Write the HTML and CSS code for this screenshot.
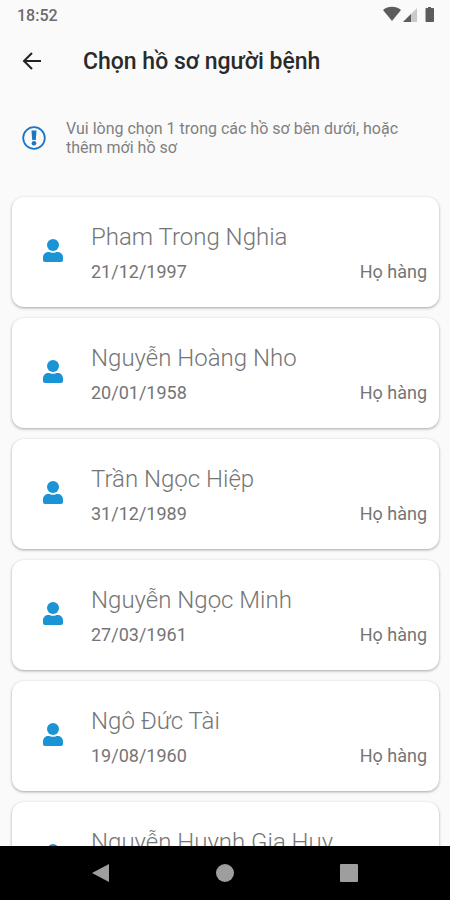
FILE: index.html
```html
<!DOCTYPE html>
<html lang="vi">
<head>
    <meta charset="UTF-8">
    <meta name="viewport" content="width=device-width, initial-scale=1.0">
    <title>Chọn hồ sơ người bệnh</title>
    <link rel="stylesheet" href="styles.css">
</head>
<body>
<svg class="sprite" aria-hidden="true">
    <symbol id="user" viewBox="0 0 20 24">
        <circle cx="10" cy="6" r="6"/>
        <path d="M0 21v-2.500C0 15 2.500 13 5.500 13c1.500 0 2.500.8 4.500.8s3-.8 4.500-.8c3 0 5.500 2 5.500 5.500V21c0 1.300-.8 2-2 2H2c-1.200 0-2-.7-2-2z"/>
    </symbol>
</svg>

<div class="status-bar">
    <span class="clock">18:52</span>
    <svg class="status-icons" width="54" height="18" viewBox="0 0 54 18">
        <path d="M0 4C5-.2 13-.2 18 4L9 15z" fill="#5c5c5c"/>
        <path d="M34 2v14H20z" fill="#c9c9c9"/>
        <path d="M28 8v8h-8z" fill="#5c5c5c"/>
        <path d="M45 1h3v1h2c.6 0 1 .4 1 1v12c0 .6-.4 1-1 1h-6.500c-.6 0-1-.4-1-1V3c0-.6.400-1 1-1H45z" fill="#5c5c5c"/>
    </svg>
</div>

<header class="header">
    <button type="button" class="back" aria-label="Quay lại">
        <svg width="20" height="18" viewBox="0 0 20 18">
            <path d="M19 9H2M10 1L2 9l8 8" fill="none" stroke="#222" stroke-width="2"/>
        </svg>
    </button>
    <h1>Chọn hồ sơ người bệnh</h1>
</header>

<div class="notice">
    <svg width="24" height="24" viewBox="0 0 24 24">
        <circle cx="12" cy="12" r="10.800" fill="none" stroke="#1976c8" stroke-width="1.800"/>
        <path d="M9.500 4.500h5l-.7 9.500h-3.600z" fill="#1976c8"/>
        <circle cx="12" cy="17.300" r="2.300" fill="#1976c8"/>
    </svg>
    <p>Vui lòng chọn 1 trong các hồ sơ bên dưới, hoặc thêm mới hồ sơ</p>
</div>

<main class="list">
    <a href="#" class="card">
        <svg class="avatar"><use href="#user"/></svg>
        <span class="name">Pham Trong Nghia</span>
        <span class="date">21/12/1997</span>
        <span class="relation">Họ hàng</span>
    </a>
    <a href="#" class="card">
        <svg class="avatar"><use href="#user"/></svg>
        <span class="name">Nguyễn Hoàng Nho</span>
        <span class="date">20/01/1958</span>
        <span class="relation">Họ hàng</span>
    </a>
    <a href="#" class="card">
        <svg class="avatar"><use href="#user"/></svg>
        <span class="name">Trần Ngọc Hiệp</span>
        <span class="date">31/12/1989</span>
        <span class="relation">Họ hàng</span>
    </a>
    <a href="#" class="card">
        <svg class="avatar"><use href="#user"/></svg>
        <span class="name">Nguyễn Ngọc Minh</span>
        <span class="date">27/03/1961</span>
        <span class="relation">Họ hàng</span>
    </a>
    <a href="#" class="card">
        <svg class="avatar"><use href="#user"/></svg>
        <span class="name">Ngô Đức Tài</span>
        <span class="date">19/08/1960</span>
        <span class="relation">Họ hàng</span>
    </a>
    <a href="#" class="card">
        <svg class="avatar"><use href="#user"/></svg>
        <span class="name">Nguyễn Huynh Gia Huy</span>
    </a>
</main>

<nav class="nav-bar">
    <button type="button" aria-label="Trở về">
        <svg width="20" height="20" viewBox="0 0 20 20"><path d="M18 1v18L1 10z"/></svg>
    </button>
    <button type="button" aria-label="Trang chủ">
        <svg width="20" height="20" viewBox="0 0 20 20"><circle cx="10" cy="10" r="9"/></svg>
    </button>
    <button type="button" aria-label="Ứng dụng gần đây">
        <svg width="20" height="20" viewBox="0 0 20 20"><rect x="1" y="1" width="18" height="18" rx="1"/></svg>
    </button>
</nav>
</body>
</html>
```
FILE: styles.css
```css
* {
    margin: 0;
    padding: 0;
    box-sizing: border-box;
    font-family: Roboto, sans-serif;
}

body {
    display: flex;
    flex-direction: column;
    height: 100vh;
    overflow: hidden;
    background-color: #fafafa;
}

svg {
    display: block;
    flex-shrink: 0;
}

button {
    border: none;
    background: none;
    cursor: pointer;
}

.sprite {
    position: absolute;
    width: 0;
    height: 0;
}

.status-bar {
    display: flex;
    justify-content: space-between;
    align-items: center;
    height: 30px;
    padding: 0 13px 0 17px;
}

.clock {
    font-size: 16px;
    font-weight: 500;
    color: #6b6b6b;
}

.header {
    display: flex;
    align-items: center;
    gap: 41px;
    height: 62px;
    padding: 0 22px;
}

.header h1 {
    font-size: 23px;
    font-weight: 500;
    color: #2a2a2a;
}

.notice {
    display: flex;
    align-items: center;
    gap: 20px;
    height: 92px;
    padding: 0 50px 0 22px;
}

.notice p {
    font-size: 16px;
    line-height: 19px;
    color: #808080;
}

.list {
    display: flex;
    flex: 1;
    flex-direction: column;
    gap: 11px;
    min-height: 0;
    padding: 13px 11px 0 12px;
    overflow: hidden;
}

.card {
    display: grid;
    flex-shrink: 0;
    grid-template-columns: 48px 1fr auto;
    grid-template-rows: 34px 34px;
    height: 110px;
    padding: 23px 12px 0 31px;
    border-radius: 12px;
    background-color: white;
    box-shadow: 0 1px 3px rgba(0, 0, 0, 0.35);
    text-decoration: none;
    align-items: center;
}

.avatar {
    grid-row: 1 / 3;
    width: 20px;
    height: 24px;
    margin-bottom: 6px;
    fill: #1a94d4;
}

.name {
    grid-column: 2 / 4;
    font-size: 24px;
    font-weight: 300;
    color: #757575;
}

.date,
.relation {
    font-size: 18px;
    color: #757575;
}

.nav-bar {
    display: flex;
    justify-content: center;
    align-items: center;
    gap: 104px;
    height: 54px;
    background-color: black;
}

.nav-bar svg {
    fill: #9e9e9e;
}
```
